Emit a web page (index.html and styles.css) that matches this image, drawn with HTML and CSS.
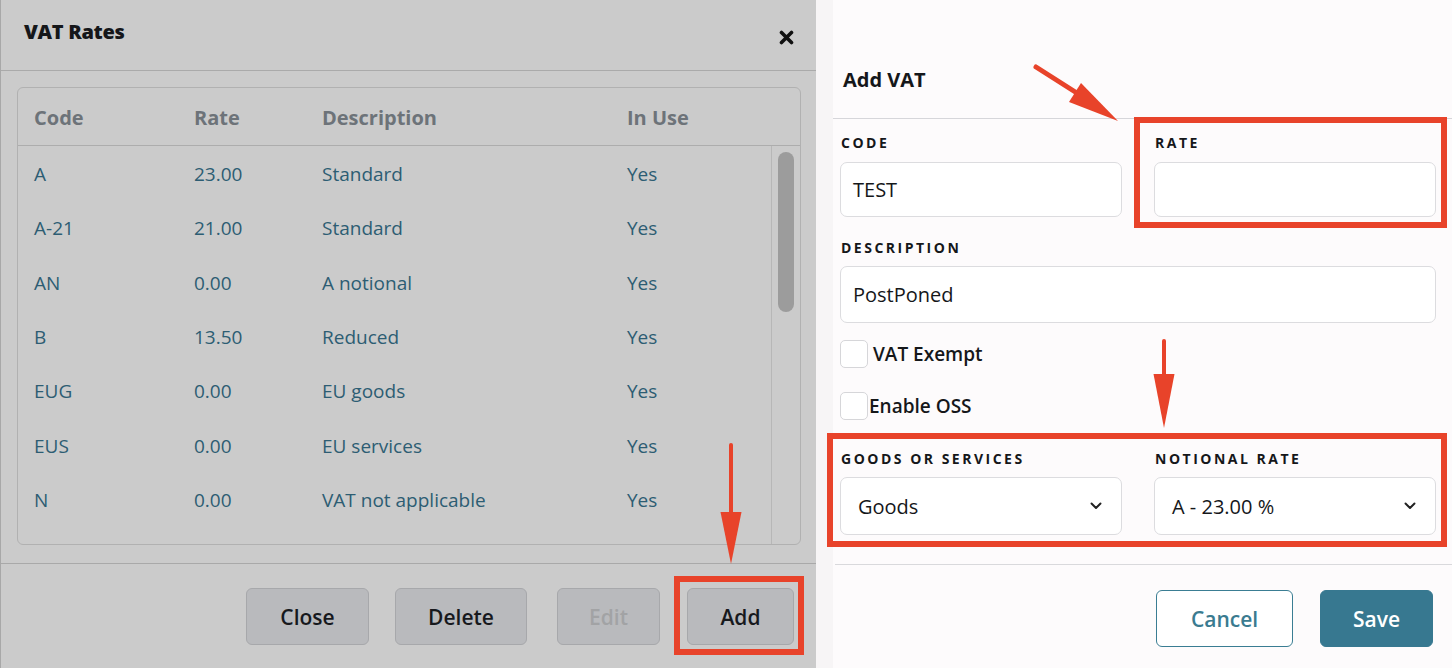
FILE: index.html
```html
<!DOCTYPE html>
<html>
<head>
<meta charset="utf-8">
<link rel="stylesheet" href="styles.css">
</head>
<body>
<div class="screen">
  <section class="rates">
    <header class="rates-head">
      <h1 class="rates-title">VAT Rates</h1>
      <span class="close-x"><svg width="15" height="15" viewBox="0 0 15 15"><path d="M2.5 2.5 L12.5 12.5 M12.5 2.5 L2.5 12.5" stroke="#111" stroke-width="3.6" stroke-linecap="round"/></svg></span>
    </header>
    <div class="table">
      <div class="thead">
        <span>Code</span><span>Rate</span><span>Description</span><span>In Use</span>
      </div>
      <div class="tbody">
        <div class="rows">
          <div class="row"><span>A</span><span>23.00</span><span>Standard</span><span>Yes</span></div>
          <div class="row"><span>A-21</span><span>21.00</span><span>Standard</span><span>Yes</span></div>
          <div class="row"><span>AN</span><span>0.00</span><span>A notional</span><span>Yes</span></div>
          <div class="row"><span>B</span><span>13.50</span><span>Reduced</span><span>Yes</span></div>
          <div class="row"><span>EUG</span><span>0.00</span><span>EU goods</span><span>Yes</span></div>
          <div class="row"><span>EUS</span><span>0.00</span><span>EU services</span><span>Yes</span></div>
          <div class="row"><span>N</span><span>0.00</span><span>VAT not applicable</span><span>Yes</span></div>
        </div>
        <div class="scroll"><div class="thumb"></div></div>
      </div>
    </div>
    <footer class="rates-foot">
      <button class="gbtn w-close">Close</button>
      <button class="gbtn w-delete">Delete</button>
      <button class="gbtn w-edit disabled">Edit</button>
      <button class="gbtn w-add">Add</button>
    </footer>
  </section>

  <section class="add">
    <div class="card">
      <div class="card-head"><h2 class="card-title">Add VAT</h2></div>
      <div class="card-body">
        <div class="two">
          <div class="field">
            <div class="label">CODE</div>
            <div class="input">TEST</div>
          </div>
          <div class="field">
            <div class="label">RATE</div>
            <div class="input"></div>
          </div>
        </div>
        <div class="field desc">
          <div class="label">DESCRIPTION</div>
          <div class="input tall">PostPoned</div>
        </div>
        <div class="check c1"><span class="box"></span><span class="check-label">VAT Exempt</span></div>
        <div class="check c2"><span class="box"></span><span class="check-label">Enable OSS</span></div>
        <div class="two selects">
          <div class="field">
            <div class="label">GOODS OR SERVICES</div>
            <div class="select"><span>Goods</span><svg width="12" height="8" viewBox="0 0 12 8"><polyline points="1.5,1.5 6,6 10.5,1.5" fill="none" stroke="#222" stroke-width="2" stroke-linecap="round" stroke-linejoin="round"/></svg></div>
          </div>
          <div class="field">
            <div class="label">NOTIONAL RATE</div>
            <div class="select"><span>A - 23.00 %</span><svg width="12" height="8" viewBox="0 0 12 8"><polyline points="1.5,1.5 6,6 10.5,1.5" fill="none" stroke="#222" stroke-width="2" stroke-linecap="round" stroke-linejoin="round"/></svg></div>
          </div>
        </div>
      </div>
      <div class="card-foot">
        <button class="cancel">Cancel</button>
        <button class="save">Save</button>
      </div>
    </div>
  </section>

  <svg class="notes" width="1452" height="668" viewBox="0 0 1452 668">
    <g fill="none" stroke="#e8432a">
      <rect x="677" y="579" width="124" height="73" stroke-width="6"/>
      <rect x="1137" y="120" width="307" height="105" stroke-width="6"/>
      <rect x="830" y="436" width="614" height="108" stroke-width="6"/>
      <line x1="731" y1="445" x2="731" y2="515" stroke-width="4" stroke-linecap="round"/>
      <line x1="1164" y1="341" x2="1164" y2="378" stroke-width="4" stroke-linecap="round"/>
      <line x1="1036" y1="67" x2="1080" y2="95" stroke-width="5" stroke-linecap="round"/>
    </g>
    <g fill="#e8432a">
      <polygon points="720.5,512 741.5,512 731,564"/>
      <polygon points="1153.5,374 1174.5,374 1164,428"/>
      <polygon points="1081,83 1069,102 1118,121"/>
    </g>
  </svg>
</div>
</body>
</html>
```

FILE: styles.css
```css
* { box-sizing: border-box; }
html, body { margin: 0; padding: 0; }
body {
  font-family: "Open Sans", "Noto Sans", sans-serif;
  width: 1452px;
  height: 668px;
  overflow: hidden;
}
.screen {
  position: relative;
  display: flex;
  width: 1452px;
  height: 668px;
}

/* ---------- left dialog ---------- */
.rates {
  width: 816px;
  height: 668px;
  background: #cbcbcb;
  border-left: 1px solid #a8a8a8;
  display: flex;
  flex-direction: column;
}
.rates-head {
  height: 71px;
  border-bottom: 1px solid #aaaaaa;
  display: flex;
  justify-content: space-between;
  align-items: flex-start;
  padding: 0 22px 0 23px;
}
.rates-title {
  margin: 0;
  padding-top: 18px;
  font-size: 20px;
  line-height: 28px;
  font-weight: 800;
  color: #15171a;
  letter-spacing: -0.3px;
}
.close-x { margin-top: 30px; display: block; height: 15px; }
.close-x svg { display: block; }

.table {
  margin: 16px 15px 0 16px;
  height: 458px;
  border: 1px solid #b1b1b1;
  border-radius: 6px;
  display: flex;
  flex-direction: column;
  overflow: hidden;
}
.thead, .row {
  display: grid;
  grid-template-columns: 160px 128px 305px 1fr;
  padding-left: 16px;
  align-items: center;
}
.thead {
  height: 58px;
  padding-top: 2px;
  border-bottom: 1px solid #adadad;
  font-size: 20px;
  font-weight: 700;
  color: #6d7379;
  flex: none;
}
.tbody {
  flex: 1;
  display: flex;
  overflow: hidden;
}
.rows { flex: 1; padding-top: 1px; }
.row {
  height: 54.3px;
  font-size: 19px;
  color: #2d5d73;
}
.scroll {
  width: 29px;
  border-left: 1px solid #b7b7b7;
  padding: 6px 5px 0 6px;
}
.thumb {
  width: 16px;
  height: 160px;
  border-radius: 8px;
  background: #9c9c9c;
}

.rates-foot {
  margin-top: 18px;
  border-top: 1px solid #a9a9a9;
  flex: 1;
  display: flex;
  justify-content: flex-end;
  align-items: flex-start;
  padding: 24px 22px 0 0;
}
.gbtn {
  height: 57px;
  background: #b9babd;
  border: 1px solid #a7a8ab;
  border-radius: 6px;
  font-family: "Open Sans", sans-serif;
  font-size: 21px;
  font-weight: 600;
  color: #17191d;
  padding: 0;
}
.gbtn.disabled { color: #a2a3a5; }
.w-close { width: 123px; }
.w-delete { width: 132px; margin-left: 26px; }
.w-edit { width: 103px; margin-left: 30px; }
.w-add { width: 107px; margin-left: 27px; }

/* ---------- right panel ---------- */
.add {
  flex: 1;
  background: #f7f5f6;
  padding-left: 17px;
  display: flex;
}
.card {
  flex: 1;
  background: #fdfbfc;
  display: flex;
  flex-direction: column;
}
.card-head {
  height: 119px;
  border-bottom: 1px solid #d6d6da;
  padding: 66px 0 0 10px;
}
.card-title {
  margin: 0;
  font-size: 20px;
  line-height: 28px;
  font-weight: 700;
  color: #15171a;
}
.card-body {
  padding: 14px 16px 0 7px;
  display: flex;
  flex-direction: column;
}
.two {
  display: grid;
  grid-template-columns: 282px 282px;
  column-gap: 32px;
}
.label {
  font-size: 14px;
  line-height: 20px;
  font-weight: 700;
  letter-spacing: 2.5px;
  color: #15171a;
  padding-left: 1px;
  margin-bottom: 9px;
}
.input, .select {
  height: 55px;
  background: #ffffff;
  border: 1px solid #dcdcdf;
  border-radius: 7px;
  font-size: 20px;
  color: #15171a;
  display: flex;
  align-items: center;
  padding-left: 12px;
}
.desc { margin-top: 21px; }
.desc .label { margin-bottom: 8px; }
.input.tall { height: 57px; }
.check {
  display: flex;
  align-items: center;
  height: 28px;
}
.c1 { margin-top: 17px; }
.c2 { margin-top: 24px; }
.box {
  width: 28px;
  height: 28px;
  background: #ffffff;
  border: 1px solid #d6d6d9;
  border-radius: 5px;
  flex: none;
}
.check-label {
  font-size: 19px;
  font-weight: 600;
  color: #15171a;
}
.c1 .check-label { margin-left: 5px; }
.c2 .check-label { margin-left: 1px; }
.selects { margin-top: 29px; }
.selects .label { margin-bottom: 8px; }
.select {
  height: 58px;
  padding: 0 19px 0 17px;
  justify-content: space-between;
}
.select svg { display: block; }
.card-foot {
  margin-top: 29px;
  margin-left: 2px;
  border-top: 1px solid #d9d9dc;
  display: flex;
  justify-content: flex-end;
  gap: 27px;
  padding: 25px 19px 0 0;
}
.cancel, .save {
  height: 57px;
  border-radius: 6px;
  font-family: "Open Sans", sans-serif;
  font-size: 21px;
  font-weight: 600;
  padding: 0;
}
.cancel {
  width: 137px;
  background: #ffffff;
  border: 1px solid #3a7d93;
  color: #3a7b90;
}
.save {
  width: 113px;
  background: #377890;
  border: 1px solid #377890;
  color: #ffffff;
}

/* annotations */
.notes {
  position: absolute;
  left: 0;
  top: 0;
  pointer-events: none;
}
```
